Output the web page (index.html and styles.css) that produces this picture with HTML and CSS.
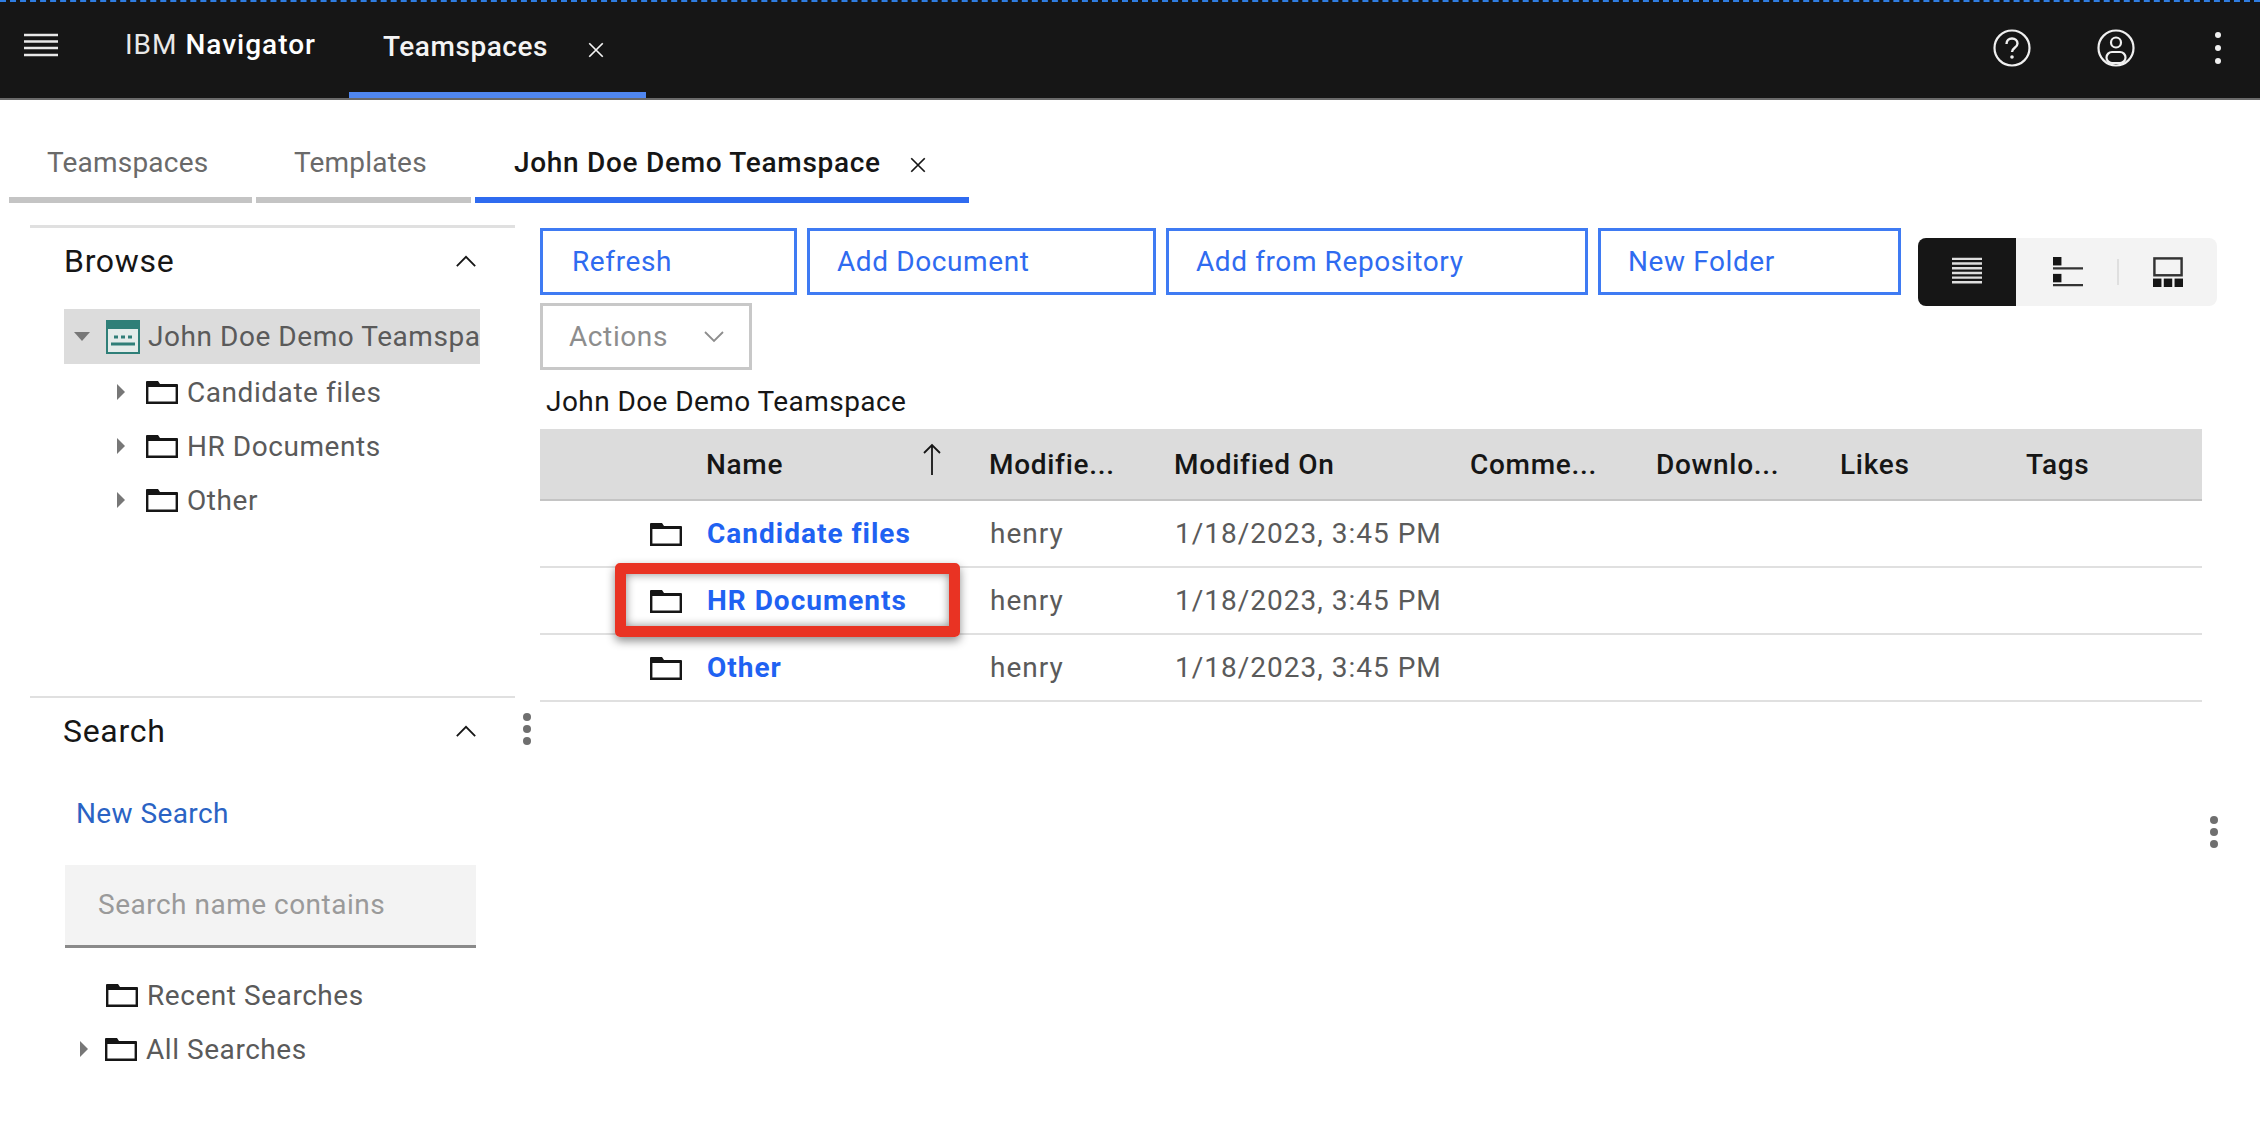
FILE: index.html
```html
<!DOCTYPE html>
<html lang="en">
<head>
    <meta charset="UTF-8">
    <title>IBM Navigator - Teamspaces</title>
    <link rel="stylesheet" href="styles.css">
</head>
<body>

<svg class="defs" width="0" height="0">
    <symbol id="folder" viewBox="0 0 32 24">
        <path d="M1 1h11l2 3h17v19H1z" fill="#fff"/>
        <path d="M1 1h11l2 3h17v3H1z" fill="#161616"/>
        <path d="M1.2 1.2v21.6h29.6V5.5H1.2" fill="none" stroke="#161616" stroke-width="2.4"/>
    </symbol>
    <symbol id="chevron-up" viewBox="0 0 24 14">
        <path d="M2 12L12 2l10 10" fill="none" stroke="#161616" stroke-width="2"/>
    </symbol>
</svg>

<header class="topbar">
    <svg class="menu-icon" viewBox="0 0 34 24" preserveAspectRatio="none">
        <path d="M0 2h34M0 8.500h34M0 15h34M0 22h34" stroke="#e8e8e8" stroke-width="2.4"/>
    </svg>
    <div class="brand">IBM <b>Navigator</b></div>
    <div class="top-tab">
        <span>Teamspaces</span>
        <svg class="close-icon" viewBox="0 0 16 16"><path d="M2 2l12 12M14 2L2 14" stroke="#f4f4f4" stroke-width="1.5"/></svg>
    </div>
    <div class="top-actions">
        <svg class="top-icon" viewBox="0 0 38 38">
            <circle cx="19" cy="19" r="17.5" fill="none" stroke="#f0f0f0" stroke-width="2.2"/>
            <path d="M13.5 15c0-3.4 2.4-5.5 5.5-5.5s5.5 2 5.5 5c0 4.4-5.5 4.2-5.5 8.500" fill="none" stroke="#f0f0f0" stroke-width="2.4"/>
            <circle cx="19" cy="28" r="1.800" fill="#f0f0f0"/>
        </svg>
        <svg class="top-icon" viewBox="0 0 38 38">
            <circle cx="19" cy="19" r="17.5" fill="none" stroke="#f0f0f0" stroke-width="2.2"/>
            <circle cx="19" cy="13.500" r="5" fill="none" stroke="#f0f0f0" stroke-width="2.2"/>
            <rect x="9.500" y="23" width="19" height="11" rx="5.500" fill="none" stroke="#f0f0f0" stroke-width="2.2"/>
        </svg>
        <svg class="top-kebab" viewBox="0 0 8 34">
            <circle cx="4" cy="4" r="3" fill="#f0f0f0"/><circle cx="4" cy="17" r="3" fill="#f0f0f0"/><circle cx="4" cy="30" r="3" fill="#f0f0f0"/>
        </svg>
    </div>
</header>

<nav class="tabs">
    <div class="tab tab-list">Teamspaces</div>
    <div class="tab tab-templates">Templates</div>
    <div class="tab tab-open">
        <span>John Doe Demo Teamspace</span>
        <svg class="close-icon" viewBox="0 0 16 16"><path d="M2 2l12 12M14 2L2 14" stroke="#161616" stroke-width="1.500"/></svg>
    </div>
</nav>

<main class="main">
    <aside class="sidebar">
        <section class="panel browse">
            <div class="panel-head">
                <h2>Browse</h2>
                <svg class="chevron"><use href="#chevron-up"/></svg>
            </div>
            <div class="tree-root">
                <span class="caret-down"></span>
                <svg class="team-icon" viewBox="0 0 34 34">
                    <rect x="1" y="1" width="32" height="32" fill="#e4ecea" stroke="#2f7f78" stroke-width="2"/>
                    <rect x="1" y="1" width="32" height="8" fill="#2f7f78"/>
                    <path d="M8 17h4M15 17h4M22 17h4M5 24h24" stroke="#2f7f78" stroke-width="3"/>
                </svg>
                <span class="tree-root-label">John Doe Demo Teamspace</span>
            </div>
            <div class="tree-row"><span class="caret-right"></span><svg class="folder"><use href="#folder"/></svg>Candidate files</div>
            <div class="tree-row"><span class="caret-right"></span><svg class="folder"><use href="#folder"/></svg>HR Documents</div>
            <div class="tree-row"><span class="caret-right"></span><svg class="folder"><use href="#folder"/></svg>Other</div>
        </section>

        <svg class="kebab side-kebab" viewBox="0 0 10 34">
            <circle cx="5" cy="5" r="4" fill="#6f6f6f"/><circle cx="5" cy="17" r="4" fill="#6f6f6f"/><circle cx="5" cy="29" r="4" fill="#6f6f6f"/>
        </svg>

        <section class="panel search">
            <div class="panel-head">
                <h2>Search</h2>
                <svg class="chevron"><use href="#chevron-up"/></svg>
            </div>
            <a class="new-search">New Search</a>
            <div class="search-input">Search name contains</div>
            <div class="tree-row search-row"><span class="caret-none"></span><svg class="folder"><use href="#folder"/></svg>Recent Searches</div>
            <div class="tree-row search-row"><span class="caret-right"></span><svg class="folder"><use href="#folder"/></svg>All Searches</div>
        </section>
    </aside>

    <div class="content">
        <div class="toolbar">
            <div class="buttons">
                <button class="btn btn-refresh">Refresh</button>
                <button class="btn btn-add">Add Document</button>
                <button class="btn btn-repo">Add from Repository</button>
                <button class="btn btn-folder">New Folder</button>
                <button class="btn-actions">
                    <span>Actions</span>
                    <svg class="actions-chevron" viewBox="0 0 20 12"><path d="M1 1l9 9 9-9" fill="none" stroke="#8d8d8d" stroke-width="1.800"/></svg>
                </button>
            </div>
            <div class="switcher">
                <div class="switch switch-on">
                    <svg class="switch-icon" viewBox="0 0 32 32">
                        <path d="M0 2h32M0 7h32M0 12h32M0 17h32M0 22h32M0 27h32" stroke="#dedede" stroke-width="2.600"/>
                    </svg>
                </div>
                <div class="switch">
                    <svg class="switch-icon" viewBox="0 0 32 32">
                        <rect x="0" y="0" width="9" height="9" fill="#161616"/>
                        <rect x="0" y="18" width="9" height="9" fill="#161616"/>
                        <path d="M0 12h32M0 30h32" stroke="#333" stroke-width="2.400"/>
                    </svg>
                </div>
                <div class="switch-sep"></div>
                <div class="switch">
                    <svg class="switch-icon" viewBox="0 0 32 32">
                        <rect x="1.500" y="1.500" width="29" height="18" fill="none" stroke="#333" stroke-width="2.600"/>
                        <rect x="0" y="23" width="9" height="9" fill="#161616"/>
                        <rect x="11.500" y="23" width="9" height="9" fill="#161616"/>
                        <rect x="23" y="23" width="9" height="9" fill="#161616"/>
                    </svg>
                </div>
            </div>
        </div>

        <div class="crumb">John Doe Demo Teamspace</div>

        <div class="table-wrap">
            <table class="docs">
                <colgroup>
                    <col class="c-icon"><col class="c-name"><col class="c-by"><col class="c-on"><col class="c-comm"><col class="c-down"><col class="c-likes"><col>
                </colgroup>
                <thead>
                    <tr>
                        <th></th>
                        <th class="sorted">Name
                            <svg class="sort-arrow" viewBox="0 0 20 32"><path d="M10 32V2M2 10l8-8 8 8" fill="none" stroke="#161616" stroke-width="1.800"/></svg>
                        </th>
                        <th>Modifie...</th>
                        <th>Modified On</th>
                        <th>Comme...</th>
                        <th>Downlo...</th>
                        <th>Likes</th>
                        <th>Tags</th>
                    </tr>
                </thead>
                <tbody>
                    <tr>
                        <td class="icon-cell"><svg class="folder"><use href="#folder"/></svg></td>
                        <td><a class="doc-link">Candidate files</a></td>
                        <td>henry</td><td>1/18/2023, 3:45 PM</td><td></td><td></td><td></td><td></td>
                    </tr>
                    <tr>
                        <td class="icon-cell"><svg class="folder"><use href="#folder"/></svg></td>
                        <td><a class="doc-link">HR Documents</a></td>
                        <td>henry</td><td>1/18/2023, 3:45 PM</td><td></td><td></td><td></td><td></td>
                    </tr>
                    <tr>
                        <td class="icon-cell"><svg class="folder"><use href="#folder"/></svg></td>
                        <td><a class="doc-link">Other</a></td>
                        <td>henry</td><td>1/18/2023, 3:45 PM</td><td></td><td></td><td></td><td></td>
                    </tr>
                </tbody>
            </table>
            <div class="callout"></div>
        </div>

        <svg class="kebab content-kebab" viewBox="0 0 10 34">
            <circle cx="5" cy="5" r="4" fill="#6f6f6f"/><circle cx="5" cy="17" r="4" fill="#6f6f6f"/><circle cx="5" cy="29" r="4" fill="#6f6f6f"/>
        </svg>
    </div>
</main>

</body>
</html>
```

FILE: styles.css
```css
* {
    box-sizing: border-box;
}
body {
    margin: 0;
    height: 1140px;
    overflow: hidden;
    background: #fff;
    font-family: Roboto, "Liberation Sans", sans-serif;
    font-size: 28px;
    letter-spacing: .55px;
    color: #161616;
}
.defs {
    position: absolute;
}

/* top bar */
.topbar {
    display: flex;
    height: 100px;
    background: #161616;
    border-top: 2px dashed #2f7de1;
    border-bottom: 2px solid #6a6a6a;
    color: #f4f4f4;
}
.menu-icon {
    width: 34px;
    height: 24px;
    margin: 31px 0 0 24px;
}
.brand {
    width: 224px;
    margin: 25px 0 0 67px;
    line-height: 36px;
    letter-spacing: 1px;
    color: #e8e8e8;
}
.brand b {
    font-weight: 500;
    color: #fff;
}
.top-tab {
    display: flex;
    align-items: flex-start;
    width: 297px;
    height: 96px;
    padding: 27px 0 0 34px;
    border-bottom: 6px solid #4f86f0;
    line-height: 36px;
    font-weight: 500;
}
.top-tab .close-icon {
    margin: 12px 0 0 39px;
}
.close-icon {
    width: 18px;
    height: 18px;
}
.top-actions {
    display: flex;
    align-items: flex-start;
    margin-left: auto;
    padding: 27px 38px 0 0;
}
.top-icon {
    width: 38px;
    height: 38px;
    margin-right: 66px;
}
.top-kebab {
    width: 8px;
    height: 34px;
    margin: 2px 0 0 13px;
}

/* tabs */
.tabs {
    display: flex;
    gap: 4px;
    height: 103px;
    padding: 44px 0 0 9px;
    letter-spacing: .2px;
}
.tab {
    height: 59px;
    padding: 0 0 0 38px;
    border-bottom: 6px solid #c4c4c4;
    line-height: 37px;
    color: #6a6a6a;
}
.tab-list {
    width: 243px;
}
.tab-templates {
    width: 215px;
}
.tab-open {
    display: flex;
    width: 494px;
    padding-left: 39px;
    border-bottom-color: #2f6bf0;
    color: #161616;
    font-weight: 500;
    letter-spacing: .7px;
}
.tab-open .close-icon {
    margin: 12px 0 0 28px;
}

/* left side */
.main {
    display: flex;
    margin-top: 22px;
}
.sidebar {
    position: relative;
    width: 540px;
    padding-left: 30px;
}
.panel-head {
    display: flex;
    align-items: center;
    justify-content: space-between;
}
.panel-head h2 {
    margin: 0;
    font-size: 32px;
    font-weight: 400;
    letter-spacing: .7px;
}
.chevron {
    width: 22px;
    height: 13px;
}
.browse {
    width: 485px;
    height: 471px;
    padding: 0 35px 0 34px;
    border-top: 3px solid #e0e0e0;
}
.browse .panel-head {
    height: 62px;
    margin: 2px 0 17px;
    padding-right: 3px;
}
.tree-root {
    display: flex;
    align-items: center;
    height: 55px;
    margin-bottom: 1px;
    overflow: hidden;
    padding-left: 10px;
    background: #dcdcdc;
    color: #5a5a5a;
    white-space: nowrap;
}
.caret-down {
    width: 0;
    height: 0;
    margin-right: 16px;
    border-left: 8px solid transparent;
    border-right: 8px solid transparent;
    border-top: 9px solid #777;
}
.team-icon {
    flex: none;
    width: 34px;
    height: 34px;
    margin-right: 8px;
}
.tree-row {
    display: flex;
    align-items: center;
    height: 54px;
    padding-left: 53px;
    color: #5a5a5a;
    white-space: nowrap;
}
.caret-right {
    flex: none;
    width: 0;
    height: 0;
    margin-right: 21px;
    border-top: 8px solid transparent;
    border-bottom: 8px solid transparent;
    border-left: 8px solid #777;
}
.caret-none {
    flex: none;
    width: 25px;
}
.folder {
    flex: none;
    width: 32px;
    height: 24px;
    margin-right: 9px;
}
.side-kebab {
    position: absolute;
    left: 522px;
    top: 487px;
}
.kebab {
    width: 10px;
    height: 34px;
}
.search {
    width: 485px;
    border-top: 2px solid #e0e0e0;
}
.search .panel-head {
    height: 66px;
    padding: 0 38px 0 33px;
}
.new-search {
    display: block;
    margin: 32px 0 0 46px;
    line-height: 36px;
    letter-spacing: .4px;
    color: #2a63c4;
}
.search-input {
    width: 411px;
    height: 83px;
    margin: 33px 0 20px 35px;
    padding: 22px 0 0 33px;
    background: #f3f3f3;
    border-bottom: 3px solid #8a8a8a;
    line-height: 36px;
    letter-spacing: .5px;
    color: #9a9a9a;
}
.search-row {
    padding-left: 50px;
}
.search-row .folder {
    margin-left: 1px;
}
.search-row .caret-right {
    margin-right: 16px;
}

/* right side */
.content {
    position: relative;
    flex: 1;
    padding-top: 3px;
}
.toolbar {
    display: flex;
    align-items: flex-start;
}
.buttons {
    display: flex;
    flex-wrap: wrap;
    gap: 8px 10px;
    width: 1361px;
}
.btn, .btn-actions {
    height: 67px;
    padding: 0 0 0 27px;
    background: #fff;
    font: inherit;
    letter-spacing: .6px;
    text-align: left;
}
.btn {
    border: 3px solid #3f7bf3;
    color: #2f6bf0;
}
.btn-refresh {
    width: 257px;
    padding-left: 29px;
}
.btn-add {
    width: 349px;
}
.btn-repo {
    width: 422px;
}
.btn-folder {
    width: 303px;
}
.btn-actions {
    display: flex;
    align-items: center;
    width: 212px;
    border: 3px solid #c8c8c8;
    color: #8d8d8d;
    padding-left: 26px;
}
.actions-chevron {
    width: 20px;
    height: 12px;
    margin-left: 36px;
}
.switcher {
    display: flex;
    align-items: center;
    width: 299px;
    height: 68px;
    margin: 10px 0 0 17px;
    background: #f3f3f3;
    border-radius: 8px;
}
.switch {
    display: flex;
    align-items: center;
    justify-content: center;
    width: 100px;
    height: 68px;
}
.switch-on {
    width: 100px;
    margin-right: 2px;
    background: #161616;
    border-radius: 8px 0 0 8px;
}
.switch-icon {
    width: 30px;
    height: 30px;
}
.switch-sep {
    width: 2px;
    height: 26px;
    background: #dfdfdf;
}
.crumb {
    margin: 14px 0 0 6px;
    line-height: 36px;
    letter-spacing: .43px;
}
.table-wrap {
    position: relative;
    width: 1662px;
    margin-top: 9px;
}
.docs {
    width: 100%;
    table-layout: fixed;
    border-collapse: collapse;
}
.c-icon { width: 166px; }
.c-name { width: 283px; }
.c-by { width: 185px; }
.c-on { width: 296px; }
.c-comm { width: 186px; }
.c-down { width: 184px; }
.c-likes { width: 186px; }
.docs th {
    position: relative;
    height: 71px;
    padding: 0;
    background: #dcdcdc;
    border-bottom: 2px solid #c4c4c4;
    font-weight: 500;
    letter-spacing: .7px;
    text-align: left;
}
.docs td {
    height: 67px;
    padding: 0 0 0 1px;
    border-bottom: 2px solid #e0e0e0;
    color: #5a5a5a;
    letter-spacing: 1px;
}
.docs .icon-cell {
    padding-left: 110px;
}
.icon-cell .folder {
    display: block;
}
.doc-link {
    color: #1f62f2;
    font-weight: 700;
}
.sort-arrow {
    position: absolute;
    right: 47px;
    top: 14px;
    width: 20px;
    height: 32px;
}
.callout {
    position: absolute;
    left: 75px;
    top: 134px;
    width: 345px;
    height: 74px;
    border: 11px solid #e93323;
    border-radius: 5px;
    box-shadow: 0 4px 10px rgba(0, 0, 0, .45), inset 0 0 10px rgba(0, 0, 0, .45);
}
.content-kebab {
    position: absolute;
    left: 1669px;
    top: 590px;
}
```
